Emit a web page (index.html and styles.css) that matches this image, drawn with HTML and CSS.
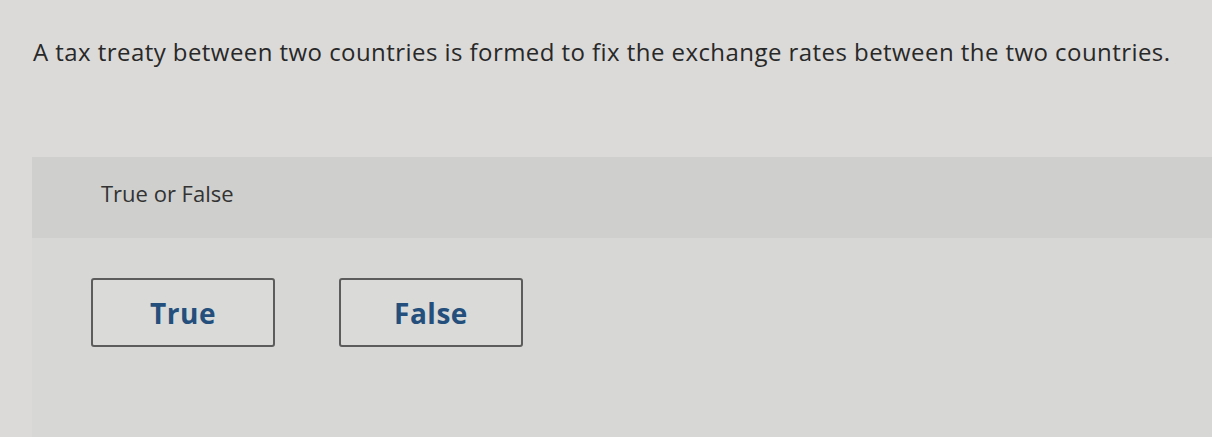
FILE: index.html
```html
<!DOCTYPE html>
<html lang="en">
<head>
  <meta charset="UTF-8" />
  <meta name="viewport" content="width=device-width, initial-scale=1.0"/>
  <title>True or False</title>
  <link rel="stylesheet" href="styles.css">
</head>
<body>
  <div class="page">
    <p class="question">A tax treaty between two countries is formed to fix the exchange rates between the two countries.</p>

    <div class="answer-area">
      <div class="prompt">True or False</div>

      <div class="choices">
        <button class="choice">True</button>
        <button class="choice">False</button>
      </div>
    </div>
  </div>
</body>
</html>
```

FILE: styles.css
```css
* { box-sizing: border-box; }

body {
  margin: 0;
  background: #dbdad8;
  font-family: 'Open Sans', 'Liberation Sans', sans-serif;
  font-variant-ligatures: none;
  color: #2d2d2d;
}

.page {
  height: 437px;
  overflow: hidden;
}

.question {
  margin: 0;
  padding: 36px 0 0 33px;
  font-size: 24px;
  letter-spacing: 0.44px;
  line-height: 32px;
  color: #282828;
}

.answer-area {
  margin: 89px 0 0 32px;
  background: #d7d7d5;
  height: 300px;
}

.prompt {
  background: #cfcfcd;
  height: 81px;
  padding: 22px 0 0 69px;
  font-size: 22px;
  line-height: 28px;
  color: #333;
}

.choices {
  display: flex;
  gap: 64px;
  padding: 40px 0 0 59px;
}

.choice {
  width: 184px;
  height: 69px;
  background: #dadad8;
  border: 2px solid #5c5c5c;
  border-radius: 3px;
  font-family: inherit;
  font-size: 28px;
  font-weight: 700;
  letter-spacing: 0.5px;
  color: #244f7c;
  cursor: pointer;
}
```
